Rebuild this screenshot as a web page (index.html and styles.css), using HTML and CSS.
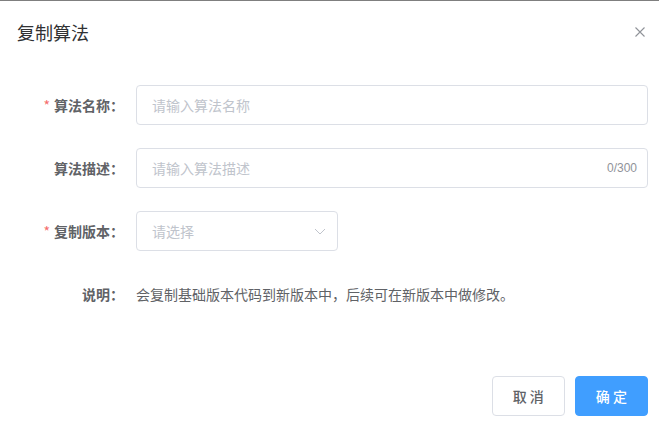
FILE: index.html
```html
<!DOCTYPE html>
<html lang="zh-CN">
<head>
<meta charset="utf-8">
<title>复制算法</title>
<link rel="stylesheet" href="styles.css">
</head>
<body>
<div class="dialog">
  <div class="dialog-header">
    <span class="dialog-title">复制算法</span>
    <button class="close-btn" aria-label="关闭">
      <svg width="12" height="12" viewBox="0 0 12 12"><path d="M1.5 1.5L10.5 10.5M10.5 1.5L1.5 10.5" stroke="#909399" stroke-width="1.1" fill="none"/></svg>
    </button>
  </div>
  <div class="form">
    <div class="form-item">
      <label class="form-label"><span class="req">*</span>算法名称：</label>
      <div class="form-content">
        <div class="input"><span class="placeholder">请输入算法名称</span></div>
      </div>
    </div>
    <div class="form-item">
      <label class="form-label">算法描述：</label>
      <div class="form-content">
        <div class="input"><span class="placeholder">请输入算法描述</span><span class="count">0/300</span></div>
      </div>
    </div>
    <div class="form-item">
      <label class="form-label"><span class="req">*</span>复制版本：</label>
      <div class="form-content">
        <div class="input select"><span class="placeholder">请选择</span>
          <svg class="arrow" width="12" height="7" viewBox="0 0 12 7"><path d="M1 1L6 6L11 1" stroke="#c0c4cc" stroke-width="1" fill="none"/></svg>
        </div>
      </div>
    </div>
    <div class="form-item last">
      <label class="form-label">说明：</label>
      <div class="form-content">
        <span class="desc">会复制基础版本代码到新版本中，后续可在新版本中做修改。</span>
      </div>
    </div>
  </div>
  <div class="footer">
    <button class="btn">取 消</button>
    <button class="btn primary">确 定</button>
  </div>
</div>
</body>
</html>
```

FILE: styles.css
```css
html, body {
  margin: 0;
  padding: 0;
  background: #fff;
}
body {
  font-family: "Noto Sans CJK SC", "Noto Sans", sans-serif;
  font-size: 14px;
  color: #606266;
}
.dialog {
  width: 659px;
  height: 424px;
  box-sizing: border-box;
  border-top: 1px solid #7f7f7f;
  display: flex;
  flex-direction: column;
  position: relative;
}
.dialog-header {
  padding: 19px 17px 0;
  height: 24px;
}
.dialog-title {
  font-size: 18px;
  line-height: 24px;
  color: #303133;
}
.close-btn {
  position: absolute;
  top: 24px;
  right: 12px;
  width: 14px;
  height: 14px;
  padding: 0;
  border: 0;
  background: none;
  display: flex;
  align-items: center;
  justify-content: center;
}
.form {
  margin-top: 41px;
  padding-right: 11px;
  display: flex;
  flex-direction: column;
  gap: 23px;
}
.form-item {
  display: flex;
  height: 40px;
  align-items: center;
}
.form-label {
  width: 136px;
  box-sizing: border-box;
  padding-right: 12px;
  text-align: right;
  font-weight: bold;
  color: #606266;
  line-height: 40px;
}
.req {
  color: #f56c6c;
  margin-right: 4px;
  font-weight: normal;
}
.form-content {
  flex: 1;
  display: flex;
  align-items: center;
}
.input {
  flex: 1;
  height: 40px;
  box-sizing: border-box;
  border: 1px solid #dcdfe6;
  border-radius: 4px;
  padding: 0 10px 0 15px;
  display: flex;
  align-items: center;
  justify-content: space-between;
}
.input.select {
  flex: 0 0 202px;
  padding-right: 11px;
}
.placeholder {
  color: #c0c4cc;
}
.count {
  font-family: "Liberation Sans", Arial, sans-serif;
  font-size: 12px;
  color: #909399;
}
.desc {
  color: #606266;
}
.footer {
  margin-top: 62px;
  padding-right: 11px;
  display: flex;
  justify-content: flex-end;
  gap: 10px;
}
.btn {
  font-family: inherit;
  font-size: 14px;
  height: 40px;
  padding: 0 20px;
  border: 1px solid #dcdfe6;
  border-radius: 4px;
  background: #fff;
  color: #606266;
  font-weight: 500;
}
.btn.primary {
  background: #409eff;
  border-color: #409eff;
  color: #fff;
}
```
